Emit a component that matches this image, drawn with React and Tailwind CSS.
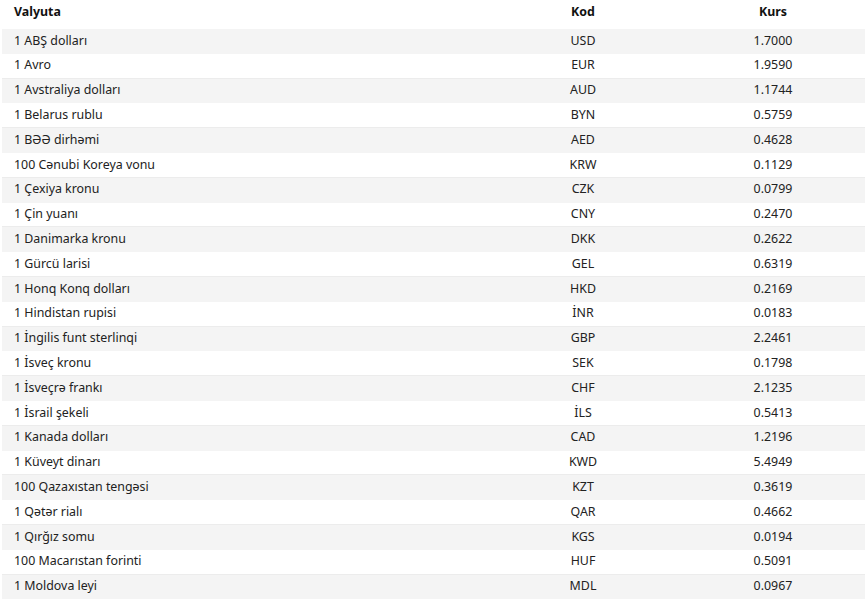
import React from 'react';

const rates = [
  ['1 ABŞ dolları', 'USD', '1.7000'],
  ['1 Avro', 'EUR', '1.9590'],
  ['1 Avstraliya dolları', 'AUD', '1.1744'],
  ['1 Belarus rublu', 'BYN', '0.5759'],
  ['1 BƏƏ dirhəmi', 'AED', '0.4628'],
  ['100 Cənubi Koreya vonu', 'KRW', '0.1129'],
  ['1 Çexiya kronu', 'CZK', '0.0799'],
  ['1 Çin yuanı', 'CNY', '0.2470'],
  ['1 Danimarka kronu', 'DKK', '0.2622'],
  ['1 Gürcü larisi', 'GEL', '0.6319'],
  ['1 Honq Konq dolları', 'HKD', '0.2169'],
  ['1 Hindistan rupisi', 'İNR', '0.0183'],
  ['1 İngilis funt sterlinqi', 'GBP', '2.2461'],
  ['1 İsveç kronu', 'SEK', '0.1798'],
  ['1 İsveçrə frankı', 'CHF', '2.1235'],
  ['1 İsrail şekeli', 'İLS', '0.5413'],
  ['1 Kanada dolları', 'CAD', '1.2196'],
  ['1 Küveyt dinarı', 'KWD', '5.4949'],
  ['100 Qazaxıstan tengəsi', 'KZT', '0.3619'],
  ['1 Qətər rialı', 'QAR', '0.4662'],
  ['1 Qırğız somu', 'KGS', '0.0194'],
  ['100 Macarıstan forinti', 'HUF', '0.5091'],
  ['1 Moldova leyi', 'MDL', '0.0967'],
];

const App = () => {
  return (
    <div className="w-[865px] h-[602px] overflow-hidden bg-white pl-[2px] text-[12.4px] text-[#222] font-['Noto_Sans',sans-serif]">
      <div className="grid grid-cols-[1fr_196px_184px] h-[29px] items-center pb-[4px] font-bold text-[#111]">
        <div className="pl-3">Valyuta</div>
        <div className="text-center">Kod</div>
        <div className="text-center">Kurs</div>
      </div>
      {rates.map(([name, code, rate], i) => (
        <div
          key={code}
          className={
            i % 2 === 0
              ? 'grid grid-cols-[1fr_196px_184px] h-[24.8px] items-center bg-[#f4f4f4] border-b border-[#f4f4f4]'
              : 'grid grid-cols-[1fr_196px_184px] h-[24.8px] items-center bg-white border-b border-[#ececec]'
          }
        >
          <div className="pl-3">{name}</div>
          <div className="text-center">{code}</div>
          <div className="text-center">{rate}</div>
        </div>
      ))}
    </div>
  );
};

export default App;
